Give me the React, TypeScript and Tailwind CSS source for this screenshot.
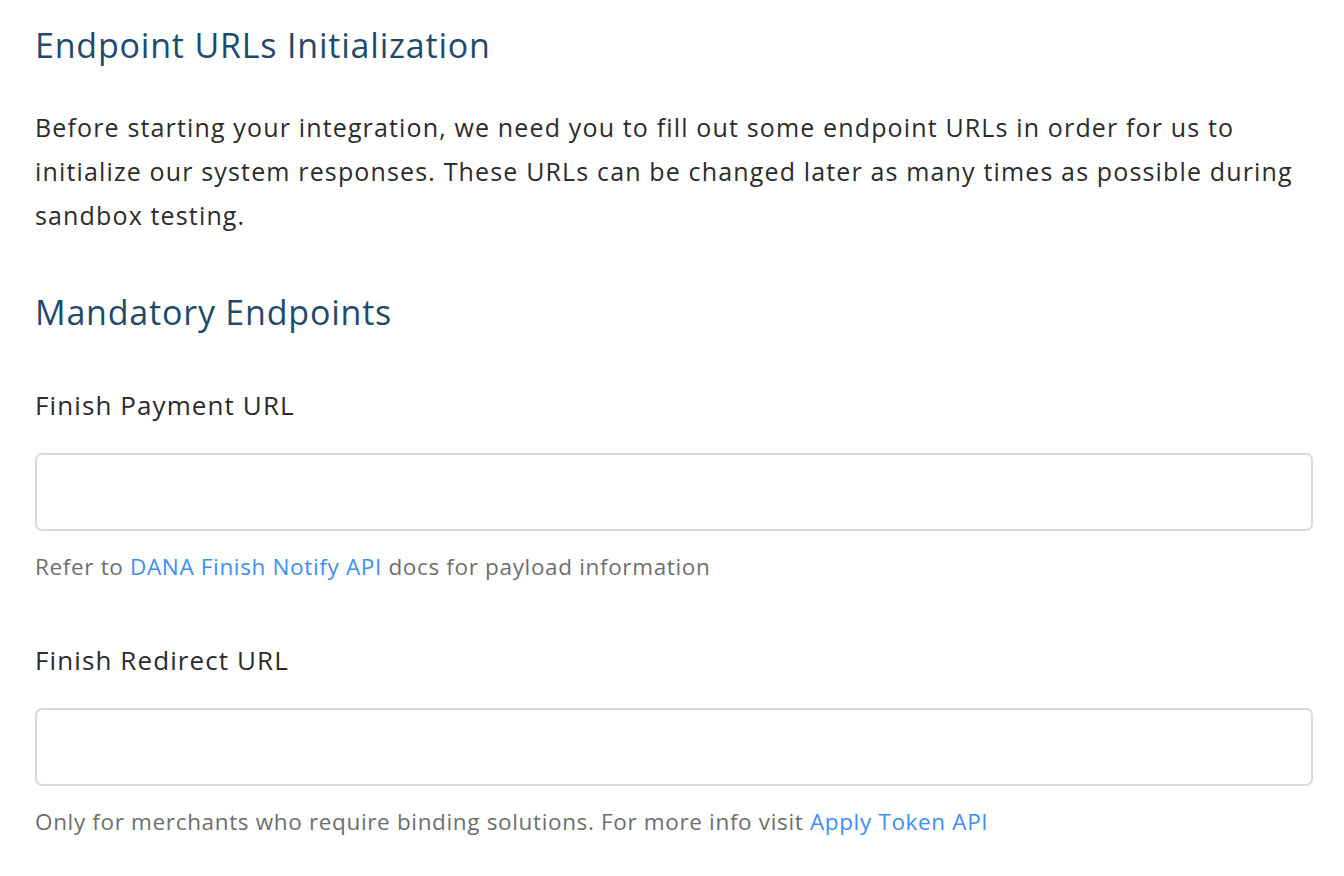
import React from 'react';

const Field = ({ label, children, gapTop }: { label: string; children: React.ReactNode; gapTop: string }) => (
  <div className={gapTop}>
    <label className="block text-[26px] leading-[32px] tracking-[1.1px] text-[#2b2b2b]">{label}</label>
    <input
      type="text"
      className="mt-[32px] block w-full h-[78px] rounded-[7px] border-2 border-[#dadada] bg-white px-4 text-[22px] outline-none"
    />
    <p className="mt-[22px] text-[22.5px] leading-[28px] tracking-[0.65px] text-[#6e6e6e]">{children}</p>
  </div>
);

const App = () => {
  return (
    <div className="min-h-screen bg-white" style={{ fontFamily: '"Open Sans", Lato, sans-serif' }}>
      <main className="pl-[35px] pr-[31px] pt-[25px]">
        <h1 className="text-[34px] leading-[41px] tracking-[0.8px] text-[#1f4a6c]">Endpoint URLs Initialization</h1>
        <p className="mt-[39px] w-[1300px] text-[25px] leading-[44px] tracking-[1.15px] text-[#2b2b2b]">
          Before starting your integration, we need you to fill out some endpoint URLs in order for us to
          <br />
          initialize our system responses. These URLs can be changed later as many times as possible during
          <br />
          sandbox testing.
        </p>

        <h2 className="mt-[55px] text-[34px] leading-[41px] tracking-[0.8px] text-[#1f4a6c]">Mandatory Endpoints</h2>

        <Field label="Finish Payment URL" gapTop="mt-[56px]">
          Refer to <a className="text-[#3d8ef8]">DANA Finish Notify API</a> docs for payload information
        </Field>

        <Field label="Finish Redirect URL" gapTop="mt-[63px]">
          Only for merchants who require binding solutions. For more info visit{' '}
          <a className="text-[#3d8ef8]">Apply Token API</a>
        </Field>
      </main>
    </div>
  );
};

export default App;
